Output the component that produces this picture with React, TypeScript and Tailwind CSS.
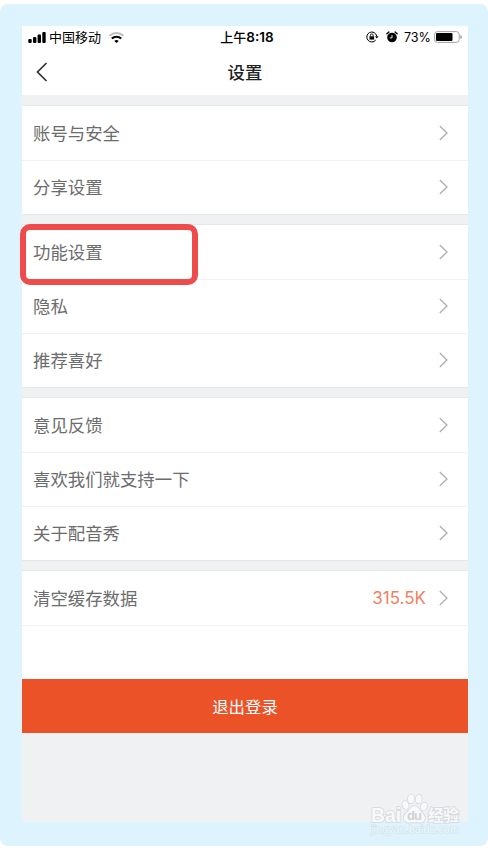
const groups = [
  ['账号与安全', '分享设置'],
  ['功能设置', '隐私', '推荐喜好'],
  ['意见反馈', '喜欢我们就支持一下', '关于配音秀'],
];

function Chevron() {
  return (
    <svg className="mt-px h-4 w-[9px] shrink-0" viewBox="0 0 9 16" fill="none" stroke="#adadad" strokeWidth="1.3">
      <path d="M.8 1 8 8 .8 15" />
    </svg>
  );
}

function Row({ label, value, marked, first }: { label: string; value?: string; marked?: boolean; first?: boolean }) {
  return (
    <div
      className={`relative flex h-[54px] items-center justify-between border-t bg-white pr-5 pb-0.5 pl-[11px] ${
        first ? 'border-white' : 'border-[#f1f1f2]'
      }`}
    >
      <span className="text-[17.4px] leading-6 text-[#6c6c6c]">{label}</span>
      <span className="flex items-center gap-[13px]">
        {value && <span className="font-[Inter] text-[17px] leading-6 text-[#f07f63]">{value}</span>}
        <Chevron />
      </span>
      {marked && (
        <div className="absolute -top-[2px] -left-[2px] z-10 h-[61px] w-[178px] rounded-[10px] border-[6px] border-[#ee4b4c]" />
      )}
    </div>
  );
}

function Gap({ top }: { top?: boolean }) {
  return (
    <div
      className={`h-[11px] border-y border-b-[#e6e7e9] bg-[#f0f1f3] ${top ? 'border-t-[#f0f1f3]' : 'border-t-[#e6e7e9]'}`}
    />
  );
}

function StatusBar() {
  return (
    <div className="grid h-[23px] grid-cols-[1fr_auto_1fr] items-center pr-[6px] pl-[6px] text-black">
      <div className="flex items-center">
        <svg className="h-[11px] w-[18px]" viewBox="0 0 18 11">
          <rect x="0.3" y="7" width="3.4" height="4" rx="1" />
          <rect x="5" y="5" width="3.4" height="6" rx="1" />
          <rect x="9.6" y="2.6" width="3.4" height="8.4" rx="1" />
          <rect x="14.3" y="0" width="3.4" height="11" rx="1" />
        </svg>
        <span className="relative -top-px ml-[3px] text-[13px] leading-5">中国移动</span>
        <svg className="ml-2 h-[11px] w-[15px]" viewBox="0 0 15 11" fill="none">
          <path d="M.5 3.900C4.300.1 10.700.1 14.500 3.900" stroke="#bdbdbd" strokeWidth="1.900" />
          <path d="M2.800 6.600c2.600-2.500 6.800-2.500 9.400 0" stroke="#000" strokeWidth="2.100" />
          <path d="M5.300 8.900c1.200-1.100 3.200-1.100 4.400 0L7.500 11z" fill="#000" />
        </svg>
      </div>
      <div className="relative -top-px left-[2px] flex items-center text-[13px] leading-5 font-medium">
        上午<span className="font-[Inter] text-[13.500px] font-semibold">8:18</span>
      </div>
      <div className="flex items-center justify-end">
        <svg className="mb-px h-3 w-[13px]" viewBox="0 0 13 12" fill="none" stroke="#000">
          <path d="M10.700 5A5 5 0 1 0 9.800 9" strokeWidth="1" />
          <path d="M9 5.200h3.600L10.800 7.600z" fill="#000" stroke="none" />
          <rect x="3.500" y="5.300" width="4.600" height="3.300" fill="#000" stroke="none" />
          <path d="M4.400 5.400V4.300a1.400 1.400 0 0 1 2.800 0v1.100" strokeWidth=".9" />
        </svg>
        <svg className="mb-px ml-[7px] h-3 w-3" viewBox="0 0 12 12">
          <circle cx="6" cy="6.500" r="4.800" />
          <path d="M.9 2.700 2.900.9M11.100 2.700 9.100.9" stroke="#000" strokeWidth="1.400" strokeLinecap="round" />
          <path d="M6 4v2.900H3.800" fill="none" stroke="#fff" strokeWidth=".9" />
        </svg>
        <span className="ml-[6px] font-[Inter] text-[12.600px] leading-5">73%</span>
        <svg className="mb-px ml-[3px] h-3 w-7" viewBox="0 0 28 12">
          <rect x=".6" y=".6" width="24.600" height="10.800" rx="2.800" fill="none" stroke="#a3a3a3" />
          <rect x="2" y="2" width="16.500" height="8" rx="1" />
          <path d="M26.400 4v4q1.400-.6 1.400-2t-1.400-2" fill="#8c8c8c" />
        </svg>
      </div>
    </div>
  );
}

function Watermark() {
  return (
    <svg
      className="absolute top-[790px] left-[366px] h-12 w-[100px]"
      viewBox="0 0 100 48"
      fill="#f8f9fa"
      stroke="#d5d8da"
      strokeWidth="1.600"
      paintOrder="stroke"
    >
      <text x="5" y="31.500" fontFamily="Liberation Sans, sans-serif" fontWeight="bold" fontSize="20" textLength="30" lengthAdjust="spacingAndGlyphs">Bai</text>
      <ellipse cx="39.500" cy="15" rx="3" ry="4.100" transform="rotate(-20 39.500 15)" />
      <ellipse cx="45" cy="8.900" rx="3" ry="4.400" />
      <ellipse cx="52.700" cy="9" rx="3" ry="4.400" transform="rotate(8 52.700 9)" />
      <ellipse cx="58" cy="16.500" rx="3" ry="4.100" transform="rotate(20 58 16.500)" />
      <path d="M48.500 16c4 0 5 4 7.300 6.400 6 5 2.500 11-3 10.200-3-.6-5.500-.6-8.500 0-6 .8-9-5.200-3.300-10.200 2.700-2.400 3.500-6.400 7.500-6.400Z" />
      <text x="41" y="30" fill="#cfd2d5" stroke="none" fontFamily="Liberation Sans, sans-serif" fontWeight="bold" fontSize="13" textLength="15">du</text>
      <text x="62" y="31" fontFamily="Noto Sans CJK SC, sans-serif" fontWeight="bold" fontSize="16" textLength="31">经验</text>
      <text x="5" y="43" fill="#eff9fd" stroke="#cde0e9" strokeWidth="1" fontFamily="Liberation Sans, sans-serif" fontSize="11" textLength="88" lengthAdjust="spacingAndGlyphs">jingyan.baidu.com</text>
    </svg>
  );
}

export default function App() {
  return (
    <div className="h-[848px] w-[488px] overflow-hidden bg-white pt-1 font-['Noto_Sans_CJK_SC',sans-serif]">
      <div className="h-[842px] rounded-lg bg-[#ddf3fd] px-[22px] pt-[22px] pr-5">
        <div className="h-[796px] bg-[#f0f1f3]">
          <header className="h-[69px] bg-white">
            <StatusBar />
            <div className="grid h-[45px] grid-cols-[1fr_auto_1fr] items-center pl-[14px] pr-[14px]">
              <svg className="h-5 w-3" viewBox="0 0 12 20" fill="none" stroke="#333" strokeWidth="1.700">
                <path d="M10.500 1 1.500 10l9 9" />
              </svg>
              <h1 className="text-[17.4px] leading-6 font-medium text-[#222]">设置</h1>
            </div>
          </header>
          <main>
            {groups.map((rows, g) => (
              <section key={g}>
                <Gap top={g === 0} />
                {rows.map((label, i) => (
                  <Row key={label} label={label} marked={label === '功能设置'} first={i === 0} />
                ))}
              </section>
            ))}
            <Gap />
            <Row label="清空缓存数据" value="315.5K" first />
            <div className="h-[54px] border-t border-[#f1f1f2] bg-white" />
            <button className="flex h-[54px] w-full items-center justify-center bg-[#eb5228] text-[16.400px] text-white">
              退出登录
            </button>
          </main>
        </div>
      </div>
      <Watermark />
    </div>
  );
}
